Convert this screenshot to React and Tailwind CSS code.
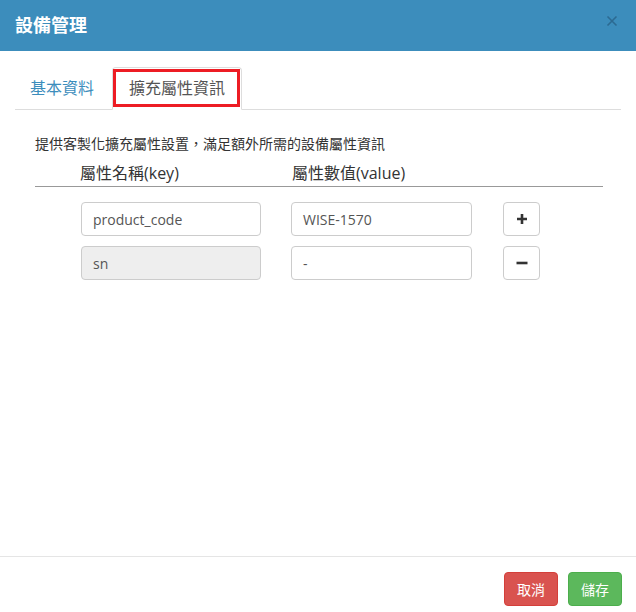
import React from 'react';

const FONT = { fontFamily: '"Open Sans", "Noto Sans CJK TC", sans-serif' };

function PlusIcon() {
  return (
    <svg width="12" height="12" viewBox="0 0 12 12">
      <path d="M6 1v10M1 6h10" stroke="#333" strokeWidth="2.6" />
    </svg>
  );
}

function MinusIcon() {
  return (
    <svg width="12" height="12" viewBox="0 0 12 12">
      <path d="M0.5 6h11" stroke="#333" strokeWidth="2.6" />
    </svg>
  );
}

function CloseIcon() {
  return (
    <svg width="12" height="12" viewBox="0 0 12 12">
      <path d="M1.5 1.5l9 9M10.5 1.5l-9 9" stroke="#2c6a92" strokeWidth="1.6" />
    </svg>
  );
}

const ROWS = [
  { key: 'product_code', value: 'WISE-1570', disabled: false, action: 'add' },
  { key: 'sn', value: '-', disabled: true, action: 'remove' },
];

export default function App() {
  return (
    <div style={FONT} className="w-[636px] h-[612px] bg-white flex flex-col overflow-hidden">
      {/* Header */}
      <div className="h-[51px] bg-[#3c8dbc] px-[15px] flex items-center justify-between shrink-0">
        <h4 className="text-white font-bold text-[18px] leading-none -mt-[2px]">設備管理</h4>
        <span className="mr-[3px] -mt-[10px]">
          <CloseIcon />
        </span>
      </div>

      {/* Body */}
      <div className="flex-1 px-[15px] pt-[16px]">
        {/* Tabs */}
        <div className="flex items-end border-b border-[#ddd] h-[43px]">
          <div className="h-[42px] flex items-center px-[15px] text-[#3c8dbc] text-[16px]">基本資料</div>
          <div className="relative ml-[3px] w-[130px] h-[43px] -mb-px bg-white border border-[#ddd] border-b-white rounded-t-[4px] flex items-center justify-center text-[16px] text-[#555]">
            <div className="absolute left-0 top-[1px] right-[1px] bottom-[2px] border-[3px] border-[#ed1c24]" />
            <span className="relative -mt-[2px]">擴充屬性資訊</span>
          </div>
        </div>

        {/* Content */}
        <div className="px-[20px]">
          <p className="mt-[24px] text-[14px] leading-[20px] text-[#333]">提供客製化擴充屬性設置，滿足額外所需的設備屬性資訊</p>

          <div className="mt-[8px] w-[568px] border-b border-[#999] flex pb-[2px] text-[16px] leading-[22px] text-[#333]">
            <div className="pl-[45px] w-[257px]">屬性名稱(key)</div>
            <div>屬性數值(value)</div>
          </div>

          <div className="mt-[15px] flex flex-col gap-[10px]">
            {ROWS.map((row) => (
              <div key={row.key} className="flex items-center pl-[46px]">
                <div
                  className={`w-[180px] h-[34px] border border-[#ccc] rounded-[4px] px-[11px] flex items-center text-[14px] text-[#555] ${
                    row.disabled ? 'bg-[#eee]' : 'bg-white'
                  }`}
                >
                  {row.key}
                </div>
                <div className="ml-[30px] w-[181px] h-[34px] border border-[#ccc] rounded-[4px] px-[11px] flex items-center text-[14px] text-[#555] bg-white">
                  {row.value}
                </div>
                <button className="ml-[31px] w-[37px] h-[34px] border border-[#ccc] rounded-[4px] bg-white flex items-center justify-center">
                  {row.action === 'add' ? <PlusIcon /> : <MinusIcon />}
                </button>
              </div>
            ))}
          </div>
        </div>
      </div>

      {/* Footer */}
      <div className="h-[56px] shrink-0 border-t border-[#e5e5e5] flex justify-end items-start gap-[10px] pt-[15px] px-[14px]">
        <button className="h-[34px] px-[12px] rounded-[4px] bg-[#d9534f] border border-[#d43f3a] text-white text-[14px]">取消</button>
        <button className="h-[34px] px-[12px] rounded-[4px] bg-[#5cb85c] border border-[#4cae4c] text-white text-[14px]">儲存</button>
      </div>
    </div>
  );
}
